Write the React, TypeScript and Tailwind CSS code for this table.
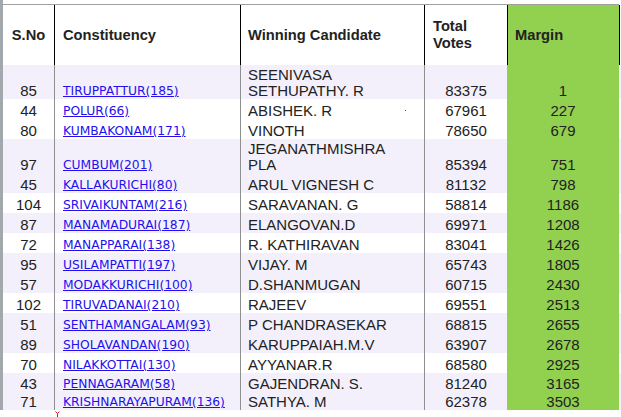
interface ResultRow {
  sno: number;
  constituency: string;
  candidate: string[];
  votes: number;
  margin: number;
  bg: string;
  height: string;
  stray?: boolean;
}

const LAV = "bg-[#f3f0fb]";
const WHITE = "bg-white";

// Sorted by winning margin, as in the source sheet
const ROWS: ResultRow[] = [
  { sno: 85, constituency: "TIRUPPATTUR(185)", candidate: ["SEENIVASA", "SETHUPATHY. R"], votes: 83375, margin: 1, bg: LAV, height: "h-[34px]" },
  { sno: 44, constituency: "POLUR(66)", candidate: ["ABISHEK. R"], votes: 67961, margin: 227, bg: WHITE, height: "h-[20px]", stray: true },
  { sno: 80, constituency: "KUMBAKONAM(171)", candidate: ["VINOTH"], votes: 78650, margin: 679, bg: WHITE, height: "h-[20px]" },
  { sno: 97, constituency: "CUMBUM(201)", candidate: ["JEGANATHMISHRA", "PLA"], votes: 85394, margin: 751, bg: LAV, height: "h-[34px]" },
  { sno: 45, constituency: "KALLAKURICHI(80)", candidate: ["ARUL VIGNESH C"], votes: 81132, margin: 798, bg: LAV, height: "h-[20px]" },
  { sno: 104, constituency: "SRIVAIKUNTAM(216)", candidate: ["SARAVANAN. G"], votes: 58814, margin: 1186, bg: WHITE, height: "h-[20px]" },
  { sno: 87, constituency: "MANAMADURAI(187)", candidate: ["ELANGOVAN.D"], votes: 69971, margin: 1208, bg: LAV, height: "h-[20px]" },
  { sno: 72, constituency: "MANAPPARAI(138)", candidate: ["R. KATHIRAVAN"], votes: 83041, margin: 1426, bg: WHITE, height: "h-[20px]" },
  { sno: 95, constituency: "USILAMPATTI(197)", candidate: ["VIJAY. M"], votes: 65743, margin: 1805, bg: LAV, height: "h-[20px]" },
  { sno: 57, constituency: "MODAKKURICHI(100)", candidate: ["D.SHANMUGAN"], votes: 60715, margin: 2430, bg: LAV, height: "h-[20px]" },
  { sno: 102, constituency: "TIRUVADANAI(210)", candidate: ["RAJEEV"], votes: 69551, margin: 2513, bg: WHITE, height: "h-[20px]" },
  { sno: 51, constituency: "SENTHAMANGALAM(93)", candidate: ["P CHANDRASEKAR"], votes: 68815, margin: 2655, bg: LAV, height: "h-[20px]" },
  { sno: 89, constituency: "SHOLAVANDAN(190)", candidate: ["KARUPPAIAH.M.V"], votes: 63907, margin: 2678, bg: LAV, height: "h-[20px]" },
  { sno: 70, constituency: "NILAKKOTTAI(130)", candidate: ["AYYANAR.R"], votes: 68580, margin: 2925, bg: WHITE, height: "h-[20px]" },
  { sno: 43, constituency: "PENNAGARAM(58)", candidate: ["GAJENDRAN. S."], votes: 81240, margin: 3165, bg: LAV, height: "h-[19px]" },
  { sno: 71, constituency: "KRISHNARAYAPURAM(136)", candidate: ["SATHYA. M"], votes: 62378, margin: 3503, bg: LAV, height: "h-[18px]" },
];

function HeaderRow(): JSX.Element {
  return (
    <div className="grid grid-cols-[52px_186px_184px_82px_113px] h-[60px] bg-white text-[14.7px] leading-[17px] font-bold text-[#222222]">
      <div className="flex items-center justify-center border-r border-black">S.No</div>
      <div className="flex items-center pl-[8px] border-r border-black">Constituency</div>
      <div className="flex items-center pl-[7px] border-r border-black">Winning Candidate</div>
      <div className="flex items-center pl-[8px]">
        Total
        <br />
        Votes
      </div>
      <div className="flex items-center pl-[7px] bg-[#92d050] border-x border-black">Margin</div>
    </div>
  );
}

function BodyRow({ row }: { row: ResultRow }): JSX.Element {
  return (
    <div
      className={`grid grid-cols-[52px_186px_184px_82px_112px] text-[15px] leading-[16px] text-[#222222] ${row.bg} ${row.height}`}
    >
      <div className="flex items-end justify-center border-r border-[#8f8f8f]">{row.sno}</div>
      <div className="flex items-end pl-[8px] border-r border-[#8f8f8f]">
        <a className="font-['DejaVu_Sans',sans-serif] text-[12.3px] text-[#2410ee] underline whitespace-nowrap">
          {row.constituency}
        </a>
      </div>
      <div className="flex items-end justify-between pl-[7px] border-r border-[#8f8f8f]">
        <div className="flex flex-col whitespace-nowrap">
          {row.candidate.map((line) => (
            <span key={line}>{line}</span>
          ))}
        </div>
        {row.stray && <span className="w-[1px] h-[1px] mr-[18px] mb-[8px] bg-[#3b3bff]" />}
      </div>
      <div className="flex items-end justify-center">{row.votes}</div>
      <div className="flex items-end justify-center bg-[#92d050]">{row.margin}</div>
    </div>
  );
}

export default function App(): JSX.Element {
  return (
    <div className="w-[621px] h-[417px] bg-white overflow-hidden font-['Liberation_Sans',Arial,sans-serif]">
      <div className="flex h-[410px]">
        <div className="w-[3px] bg-[#a3a8ad]" />
        <div className="flex flex-col w-[618px]">
          <div className="h-[4px]" />
          <div className="h-[1px] w-[616px] bg-[#a0a0a0]" />
          <div className="flex-1 min-h-0 overflow-hidden">
            <HeaderRow />
            {ROWS.map((row) => (
              <BodyRow key={row.sno} row={row} />
            ))}
          </div>
        </div>
      </div>
      {/* ── stray red mark under the sheet ── */}
      <div className="h-[7px] pl-[55px] pt-[1px]">
        <svg width="5" height="6" viewBox="0 0 5 6" className="block">
          <path d="M0.5 0.5 L2.5 2.5 L4.5 0.5 M2.5 2.5 V6" stroke="#e02020" strokeWidth="1" fill="none" />
        </svg>
      </div>
    </div>
  );
}
